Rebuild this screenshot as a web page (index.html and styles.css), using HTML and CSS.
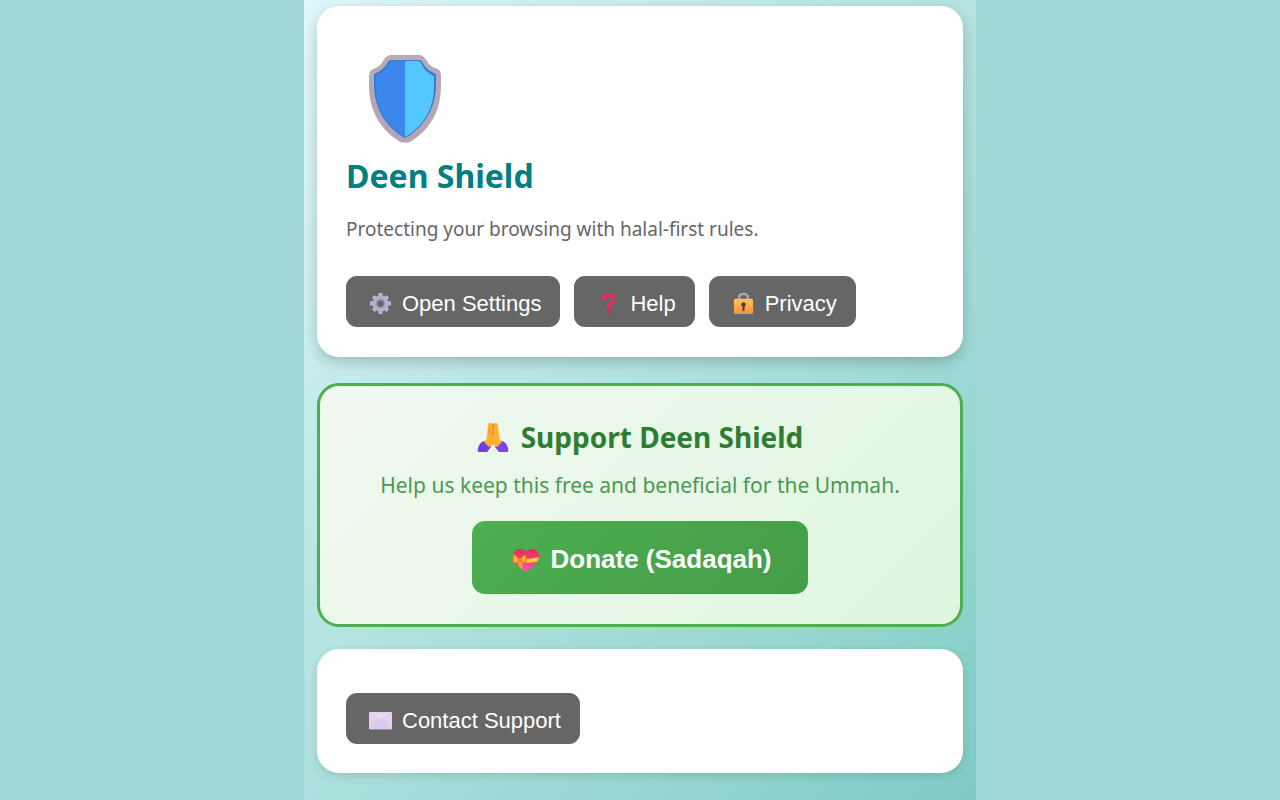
FILE: index.html
```html
<!DOCTYPE html>
<html lang="en">
<head>
    <meta charset="UTF-8">
    <meta name="viewport" content="width=device-width, initial-scale=1.0">
    <title>Deen Shield</title>
    <link rel="stylesheet" href="styles.css">
</head>
<body>
    <main class="popup">
        <section class="card">
            <svg class="logo" viewBox="0 0 74 88" aria-hidden="true">
                <defs>
                    <linearGradient id="rim" x1="0" y1="0" x2="0" y2="1">
                        <stop offset="0" stop-color="#b5adb9"/>
                        <stop offset="1" stop-color="#b5a3b5"/>
                    </linearGradient>
                </defs>
                <path fill="url(#rim)" d="M22 0H52Q56 1 59 6Q62 12 70 14Q73 16 73 21V31C73 59 59 77 42 87Q37 88 32 87C15 76 1 59 1 31V21Q1 16 5 14Q12 12 15 6Q18 1 22 0Z"/>
                <path fill="#3c78d6" d="M22 5H52Q54 6 56 10Q60 16 68 19V32C67 56 54 74 37 83C20 74 7 56 6 32V19Q14 16 18 10Q20 6 22 5Z"/>
                <path fill="#3c87eb" d="M23 6H37V82C21 73 8 56 8 32V21Q15 18 19 12Q21 7 23 6Z"/>
                <path fill="#55c7ff" d="M37 6H51Q53 7 55 12Q59 18 66 21V32C66 56 53 73 37 82Z"/>
            </svg>
            <h1>Deen Shield</h1>
            <p class="tagline">Protecting your browsing with halal-first rules.</p>
            <div class="actions">
                <button class="btn" type="button">
                    <svg class="icon" viewBox="0 0 24 24" aria-hidden="true">
                        <g stroke="#c3b5d7" stroke-width="4">
                            <path d="M12 1V23M1 12H23M4.5 4.5L19.5 19.5M19.5 4.5L4.5 19.5"/>
                        </g>
                        <circle cx="12" cy="12" r="8.5" fill="#b9abcf"/>
                        <circle cx="12" cy="12" r="4.5" fill="#8e829f"/>
                        <circle cx="12" cy="12" r="3" fill="#666"/>
                    </svg>
                    Open Settings
                </button>
                <button class="btn" type="button">
                    <svg class="icon" viewBox="0 0 24 24" aria-hidden="true">
                        <path d="M7 7Q7 3 12 3Q17 3 17 7.5Q17 10 14.5 11.5Q12.5 13 12.5 16" fill="none" stroke="#e52f61" stroke-width="4" stroke-linecap="round"/>
                        <circle cx="12.5" cy="21" r="2.2" fill="#d9244f"/>
                    </svg>
                    Help
                </button>
                <button class="btn" type="button">
                    <svg class="icon" viewBox="0 0 24 24" aria-hidden="true">
                        <defs>
                            <linearGradient id="lock" x1="0" y1="0" x2="0" y2="1">
                                <stop offset="0" stop-color="#ffc64e"/>
                                <stop offset="1" stop-color="#f49246"/>
                            </linearGradient>
                        </defs>
                        <path d="M7.5 11V6Q7.5 2 12 2Q16.5 2 16.5 6V11" fill="none" stroke="#b0a4b8" stroke-width="2.5"/>
                        <rect x="2" y="7" width="20" height="16" rx="2" fill="url(#lock)"/>
                        <circle cx="12" cy="13" r="2.4" fill="#5a3d35"/>
                        <path d="M12 13V19" stroke="#5a3d35" stroke-width="2.2" stroke-linecap="round"/>
                    </svg>
                    Privacy
                </button>
            </div>
        </section>

        <section class="card support">
            <h2>
                <svg class="icon-lg" viewBox="0 0 32 32" aria-hidden="true">
                    <path fill="#6f3fe0" d="M7 20Q12 21 14 26L10 31H2Q0 31 1 27Q3 21 7 20Z"/>
                    <path fill="#7c45e8" d="M25 20Q20 21 18 26L22 31H30Q32 31 31 27Q29 21 25 20Z"/>
                    <path fill="#ffb02e" d="M11 4Q12 1 14 2L16 3L18 2Q20 1 21 4L22 14Q22 19 25 21L20 26Q18 24 16 24Q14 24 12 26L7 21Q10 19 10 14Z"/>
                    <path d="M16 3V14M12.5 12L13 8" fill="none" stroke="#f08a2c" stroke-width="1.5" stroke-linecap="round"/>
                </svg>
                Support Deen Shield
            </h2>
            <p class="support-text">Help us keep this free and beneficial for the Ummah.</p>
            <button class="btn donate" type="button">
                <svg class="icon-md" viewBox="0 0 28 26" aria-hidden="true">
                    <defs>
                        <linearGradient id="heart" x1="0" y1="0" x2="0" y2="1">
                            <stop offset="0" stop-color="#e5284e"/>
                            <stop offset="1" stop-color="#f45bb5"/>
                        </linearGradient>
                        <clipPath id="heartShape">
                            <path d="M14 5C17 0 27 1 27 9C27 16 20 21 14 25C8 21 1 16 1 9C1 1 11 0 14 5Z"/>
                        </clipPath>
                    </defs>
                    <g clip-path="url(#heartShape)">
                        <rect width="28" height="26" fill="url(#heart)"/>
                        <path d="M0 11Q14 13 28 10V14Q14 17 0 15Z" fill="#ffc83d"/>
                        <path d="M8 13L9 24" stroke="#f59b35" stroke-width="4"/>
                    </g>
                    <path d="M8 13Q1 5 1 9V15Q2 18 8 13Q13 6 14 9V14Q13 17 8 13Z" fill="#ffb02e" stroke="#d67422"/>
                    <circle cx="8" cy="13" r="2" fill="#e88722"/>
                </svg>
                Donate (Sadaqah)
            </button>
        </section>

        <section class="card contact">
            <button class="btn" type="button">
                <svg class="icon" viewBox="0 0 24 24" aria-hidden="true">
                    <rect x="0" y="3" width="24" height="18" rx="1" fill="#e3d3ee"/>
                    <path d="M0 20L9 11H15L24 20Q24 21 23 21H1Z" fill="#dccaec"/>
                    <path d="M1 4L12 12L23 4" fill="#e8dcee" stroke="#d6c7df"/>
                </svg>
                Contact Support
            </button>
        </section>
    </main>
</body>
</html>
```
FILE: styles.css
```css
* {box-sizing: border-box;}

body {
    margin: 0;
    background-color: #9fd6d6;
    font-family: "Noto Sans", "Open Sans", sans-serif;
}

.popup {
    max-width: 672px;
    min-height: 100vh;
    margin: auto;
    padding: 6px 13px 26px;
    background: linear-gradient(135deg, #e0f7fa, #80cbc4);
}

.card {
    padding: 29px 29px 30px;
    border-radius: 22px;
    background-color: #fff;
    box-shadow: 0 5px 14px rgba(0, 0, 0, 0.2);
}

.logo {
    display: block;
    width: 74px;
    height: 88px;
    margin: 20px 0 0 22px;
}

h1 {
    margin: 10px 0 0;
    color: #008080;
    font-size: 32px;
    line-height: 46px;
}

.tagline {
    margin: 16px 0 0;
    color: #666;
    font-size: 19px;
    line-height: 28px;
}

.actions {
    display: flex;
    flex-wrap: wrap;
    gap: 14px;
    margin-top: 33px;
}

.btn {
    display: inline-flex;
    align-items: center;
    gap: 10px;
    height: 51px;
    padding: 4px 19px 0 23px;
    border: 0;
    border-radius: 11px;
    background-color: #666;
    color: #fff;
    font-family: "Liberation Sans", Arial, sans-serif;
    font-size: 22px;
    cursor: pointer;
}

.icon {
    width: 23px;
    height: 23px;
}

/* donation */
.support {
    margin-top: 26px;
    padding: 30px;
    border: 3px solid #4caf50;
    background: linear-gradient(135deg, #f1f8f1, #dff6df);
    box-shadow: none;
    text-align: center;
}

h2 {
    display: flex;
    justify-content: center;
    align-items: center;
    gap: 12px;
    margin: 0;
    color: #2e7d32;
    font-size: 28px;
    line-height: 42px;
}

.icon-lg {
    width: 32px;
    height: 32px;
}

.support-text {
    margin: 12px 0 21px;
    color: #4a9a50;
    font-size: 21px;
    line-height: 30px;
}

.donate {
    height: 73px;
    padding: 4px 36px 0 40px;
    border-radius: 13px;
    background: linear-gradient(135deg, #4caf50, #459d49);
    font-size: 26px;
    font-weight: bold;
}

.icon-md {
    width: 28px;
    height: 26px;
}

/* contact */
.contact {
    margin-top: 22px;
    padding: 44px 29px 29px;
    box-shadow: 0 3px 8px rgba(0, 0, 0, 0.12);
}
```
